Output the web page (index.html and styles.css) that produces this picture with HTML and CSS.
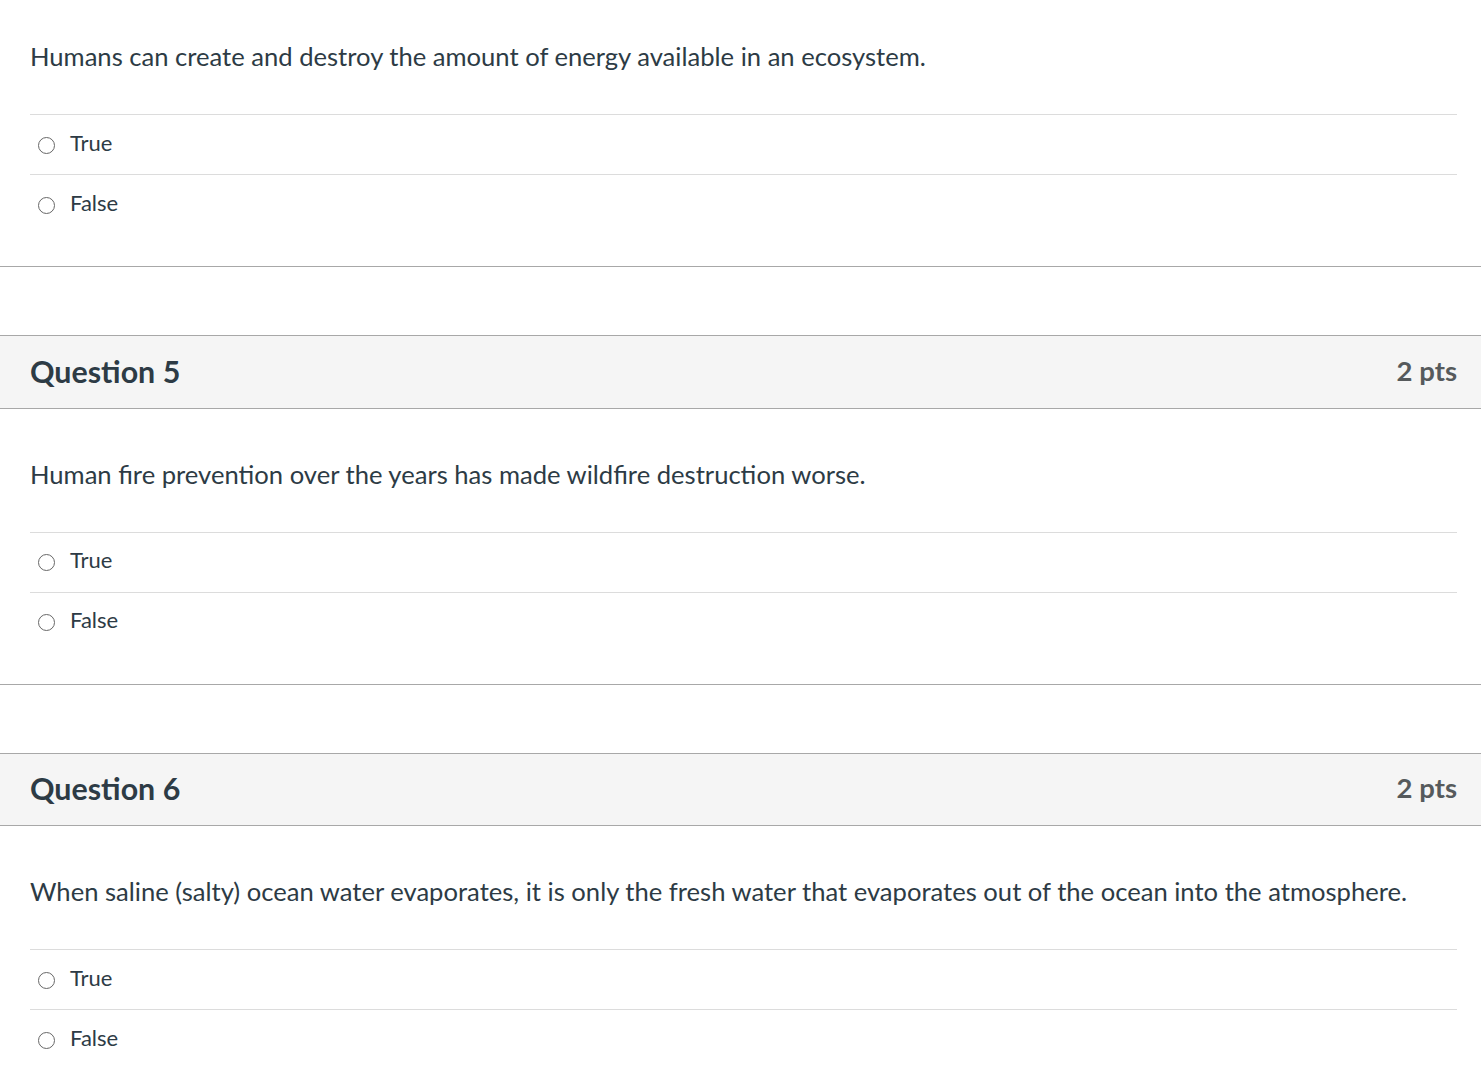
FILE: index.html
```html
<!DOCTYPE html>
<html>
<head>
<meta charset="utf-8">
<link rel="stylesheet" href="styles.css">
</head>
<body>
<div class="question first">
  <div class="qbody">
    <div class="qtext">Humans can create and destroy the amount of energy available in an ecosystem.</div>
    <div class="answers">
      <label class="answer"><span class="radio"></span><span class="atext">True</span></label>
      <label class="answer"><span class="radio"></span><span class="atext">False</span></label>
    </div>
  </div>
</div>
<div class="question">
  <div class="qheader"><span class="qtitle">Question 5</span><span class="pts">2 pts</span></div>
  <div class="qbody">
    <div class="qtext">Human fire prevention over the years has made wildfire destruction worse.</div>
    <div class="answers">
      <label class="answer"><span class="radio"></span><span class="atext">True</span></label>
      <label class="answer"><span class="radio"></span><span class="atext">False</span></label>
    </div>
  </div>
</div>
<div class="question">
  <div class="qheader"><span class="qtitle">Question 6</span><span class="pts">2 pts</span></div>
  <div class="qbody">
    <div class="qtext">When saline (salty) ocean water evaporates, it is only the fresh water that evaporates out of the ocean into the atmosphere.</div>
    <div class="answers">
      <label class="answer"><span class="radio"></span><span class="atext">True</span></label>
      <label class="answer"><span class="radio"></span><span class="atext">False</span></label>
    </div>
  </div>
</div>
</body>
</html>
```
FILE: styles.css
```css
html, body {
  margin: 0;
  padding: 0;
  background: #fff;
}
body {
  font-family: Lato, "Open Sans", sans-serif;
  color: #2d3b45;
}
.question {
  border-top: 1px solid #a8a8a8;
  border-bottom: 1px solid #a8a8a8;
  margin-bottom: 68px;
}
.question.first {
  border-top: none;
}
.qheader {
  display: flex;
  justify-content: space-between;
  align-items: center;
  height: 71.6px;
  padding: 0 24px 0 30px;
  background: #f5f5f5;
  border-bottom: 1px solid #a8a8a8;
}
.qtitle {
  font-weight: 700;
  font-size: 30.4px;
  line-height: 36px;
  margin-top: -2px;
}
.pts {
  font-weight: 700;
  font-size: 27.5px;
  line-height: 36px;
  margin-top: -2px;
  color: #565a5c;
}
.qbody {
  padding: 48px 24px 32px 30px;
}
.first .qbody {
  padding-top: 39px;
}
.qtext {
  font-size: 25.6px;
  line-height: 36px;
  margin-top: -1px;
  margin-bottom: 40px;
}
.answers {
  display: flex;
  flex-direction: column;
}
.answer {
  display: flex;
  align-items: center;
  height: 59px;
  border-top: 1px solid #dcdcdc;
  padding-left: 8px;
}
.radio {
  width: 15px;
  height: 15px;
  border: 1.6px solid #676767;
  border-radius: 50%;
  margin-right: 15px;
  margin-top: 1px;
  flex: none;
}
.atext {
  font-size: 22px;
  line-height: 30px;
  margin-top: -4px;
}
```
